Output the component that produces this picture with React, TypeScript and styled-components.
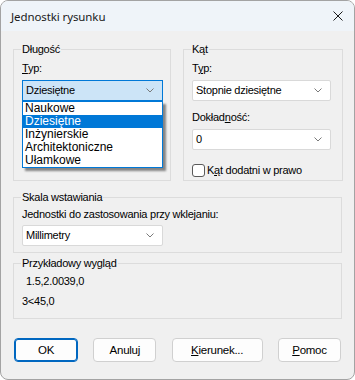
import React, { ReactElement } from 'react'
import styled, { createGlobalStyle } from 'styled-components'

const Global = createGlobalStyle`
  html, body { margin: 0; padding: 0; background: #ffffff; }
  body {
    font-family: "Liberation Sans", Arial, sans-serif;
    font-size: 11px;
    letter-spacing: -0.25px;
    color: #000;
  }
`

const Window = styled.div`
  width: 355px;
  height: 380px;
  box-sizing: border-box;
  border: 1px solid #a3a3a3;
  border-radius: 8px;
  overflow: hidden;
  background: #f0f0f0;
  display: flex;
  flex-direction: column;
`

const TitleBar = styled.div`
  height: 30px;
  flex: none;
  background: #eff4f9;
  display: flex;
  align-items: center;
  justify-content: space-between;
  padding: 0 10px 0 10px;
  font-family: "Noto Sans", "Open Sans", sans-serif;
  font-size: 11.5px;
  letter-spacing: -0.1px;
  color: #1a1a1a;
`

const Close = styled.svg`
  width: 10px;
  height: 10px;
  margin-right: 1px;
`

const Body = styled.div`
  flex: 1;
  padding: 12px 12px 0 12px;
  display: flex;
  flex-direction: column;
`

const TopRow = styled.div`
  display: grid;
  grid-template-columns: 158px 160px;
  column-gap: 12px;
`

const Group = styled.fieldset<{ $top?: number; $bottom?: number }>`
  margin: ${(p) => p.$top ?? 0}px 0 0 0;
  padding: 0 8px ${(p) => p.$bottom ?? 3}px 8px;
  min-width: 0;
  border: 1px solid #dcdcdc;
  display: flex;
  flex-direction: column;
  align-items: flex-start;
`

const Legend = styled.legend`
  padding: 0 1px;
  margin-left: -1px;
  line-height: 13px;
  font-size: 11px;
`

const Label = styled.div<{ $top?: number; $indent?: number }>`
  margin-top: ${(p) => p.$top ?? 0}px;
  padding-left: ${(p) => p.$indent ?? 0}px;
  line-height: 13px;
  white-space: nowrap;
`

const Combo = styled.div<{ $open?: boolean; $w: number; $top?: number }>`
  margin-top: ${(p) => p.$top ?? 0}px;
  width: ${(p) => p.$w}px;
  height: 21px;
  box-sizing: border-box;
  border: 1px solid ${(p) => (p.$open ? '#0078d7' : '#d9d9d9')};
  border-radius: ${(p) => (p.$open ? 0 : 2)}px;
  background: ${(p) => (p.$open ? '#cce4f7' : '#ffffff')};
  display: flex;
  align-items: center;
  justify-content: space-between;
  padding: 0 8px 0 3px;
  line-height: 13px;
`

const Chevron = (): ReactElement => (
  <svg width="8" height="5" viewBox="0 0 8 5">
    <path d="M0.5 0.5 L4 4 L7.5 0.5" fill="none" stroke="#7a7a7a" strokeWidth="1" />
  </svg>
)

const DropWrap = styled.div`
  position: relative;
`

const List = styled.ul`
  position: absolute;
  left: 0;
  top: 100%;
  width: 141px;
  box-sizing: border-box;
  margin: 0;
  padding: 0;
  list-style: none;
  background: #ffffff;
  border: 1px solid #0078d7;
  box-shadow: 3px 3px 2px rgba(0, 0, 0, 0.45);
  z-index: 2;
`

const Item = styled.li<{ $sel?: boolean }>`
  height: 13px;
  line-height: 13px;
  padding-left: 2px;
  font-size: 12px;
  letter-spacing: 0;
  background: ${(p) => (p.$sel ? '#0078d7' : 'transparent')};
  color: ${(p) => (p.$sel ? '#ffffff' : '#000000')};
`

const CheckRow = styled.label`
  margin-top: 14px;
  display: flex;
  align-items: center;
  gap: 2px;
  line-height: 13px;
`

const Box = styled.span`
  width: 13px;
  height: 13px;
  box-sizing: border-box;
  border: 1px solid #5a5a5a;
  border-radius: 3px;
  background: #ffffff;
`

const Buttons = styled.div`
  margin: 19px 1px 0 1px;
  display: flex;
  justify-content: space-between;
`

const Button = styled.div<{ $w: number; $default?: boolean }>`
  width: ${(p) => p.$w}px;
  height: 24px;
  box-sizing: border-box;
  border: 1px solid ${(p) => (p.$default ? '#0067c0' : '#d0d0d0')};
  box-shadow: ${(p) => (p.$default ? 'inset 0 0 0 1px #0067c0' : 'none')};
  border-radius: 4px;
  background: #fdfdfd;
  display: flex;
  align-items: center;
  justify-content: center;
  font-size: 11.5px;
`

const U = styled.span`
  text-decoration: underline;
`

const items = ['Naukowe', 'Dziesiętne', 'Inżynierskie', 'Architektoniczne', 'Ułamkowe']

export default function App(): ReactElement {
  return (
    <>
      <Global />
      <Window>
        <TitleBar>
          <span>Jednostki rysunku</span>
          <Close viewBox="0 0 10 10">
            <path d="M0.5 0.5 L9.5 9.5 M9.5 0.5 L0.5 9.5" stroke="#1a1a1a" strokeWidth="1" />
          </Close>
        </TitleBar>
        <Body>
          <TopRow>
            <Group>
              <Legend>Długość</Legend>
              <Label $top={6}>
                <U>T</U>yp:
              </Label>
              <DropWrap>
                <Combo $open $w={141} $top={5}>
                  <span>Dziesiętne</span>
                  <Chevron />
                </Combo>
                <List>
                  {items.map((it) => (
                    <Item key={it} $sel={it === 'Dziesiętne'}>
                      {it}
                    </Item>
                  ))}
                </List>
              </DropWrap>
            </Group>
            <Group>
              <Legend>Kąt</Legend>
              <Label $top={6}>
                T<U>y</U>p:
              </Label>
              <Combo $w={139} $top={5}>
                <span>Stopnie dziesiętne</span>
                <Chevron />
              </Combo>
              <Label $top={10}>
                Dokład<U>n</U>ość:
              </Label>
              <Combo $w={139} $top={5}>
                <span>0</span>
                <Chevron />
              </Combo>
              <CheckRow>
                <Box />
                <span>
                  K<U>ą</U>t dodatni w prawo
                </span>
              </CheckRow>
            </Group>
          </TopRow>
          <Group $top={10} $bottom={6}>
            <Legend>Skala wstawiania</Legend>
            <Label $top={4}>Jednostki do zastosowania przy wklejaniu:</Label>
            <Combo $w={141} $top={4}>
              <span>Millimetry</span>
              <Chevron />
            </Combo>
          </Group>
          <Group $top={4} $bottom={10}>
            <Legend>Przykładowy wygląd</Legend>
            <Label $top={5} $indent={4}>
              1.5,2.0039,0
            </Label>
            <Label $top={7}>3&lt;45,0</Label>
          </Group>
          <Buttons>
            <Button $w={64} $default>
              OK
            </Button>
            <Button $w={63}>Anuluj</Button>
            <Button $w={91}>
              <U>K</U>ierunek...
            </Button>
            <Button $w={63}>
              <U>P</U>omoc
            </Button>
          </Buttons>
        </Body>
      </Window>
    </>
  )
}
